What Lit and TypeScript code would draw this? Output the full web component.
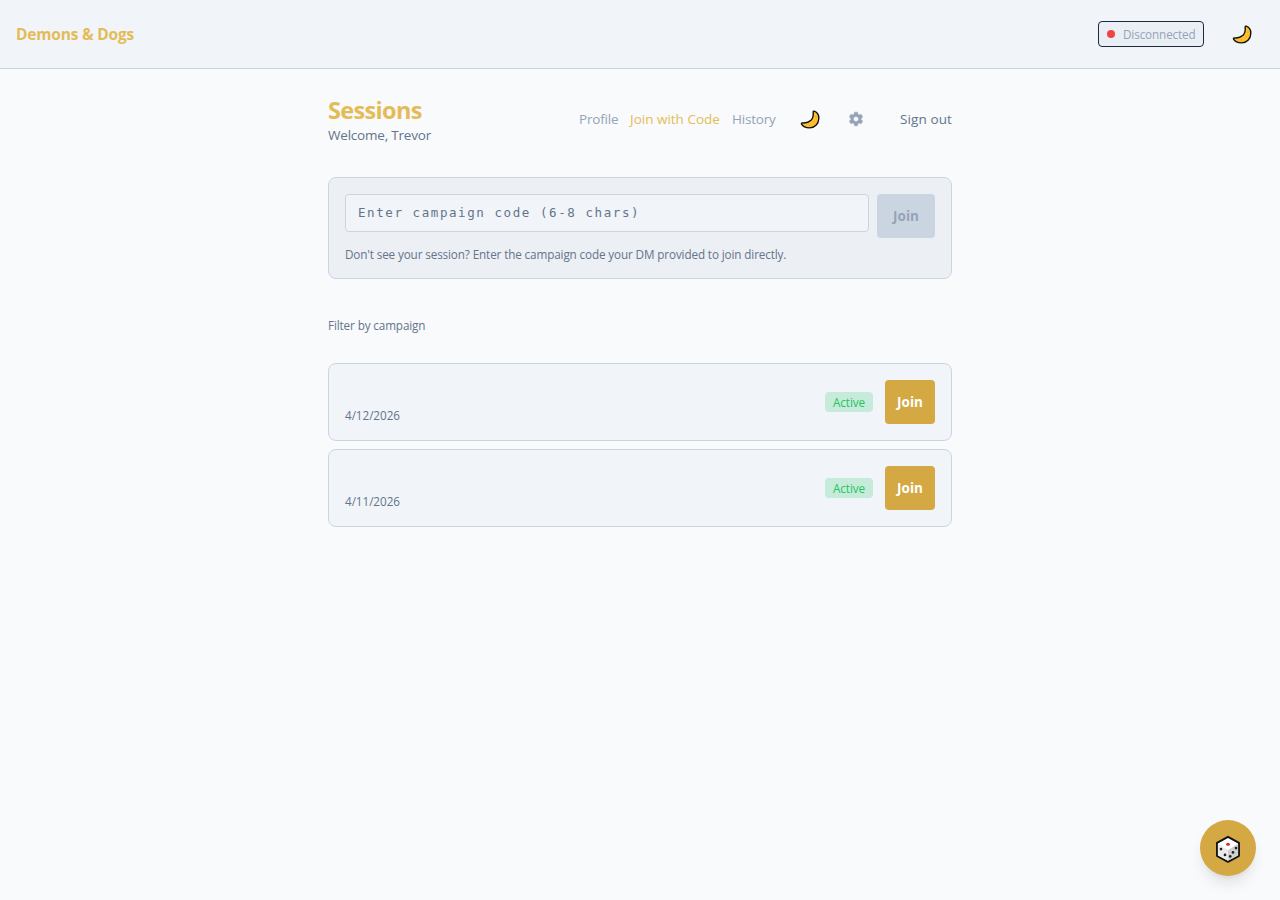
import { LitElement, html, css, svg } from "lit";
import { customElement } from "lit/decorators.js";

const moon = html`<svg class="moon" width="20" height="20" viewBox="0 0 20 20">
  <path d="M14.300 2.200C17.100 3.200 18.900 6 18.800 9.400C18.600 14.900 14.600 18.900 9.600 18.900C5.900 18.900 2.900 17.500 1.600 15.200C1.200 14.300 1.600 13.800 2.500 13.900C5.600 14.200 8.900 13.400 11 11.300C13.100 9.100 13.500 6.500 13.200 3.100C13.100 2.200 13.500 1.900 14.300 2.200Z" fill="#ffc02e" stroke="#111" stroke-width="1.400" stroke-linejoin="round"/>
  <circle cx="16" cy="8" r=".8" fill="#f0a01c"/><circle cx="9.500" cy="16.200" r=".8" fill="#f0a01c"/><circle cx="14" cy="12.600" r=".7" fill="#f0a01c"/>
</svg>`;

const gear = html`<svg width="16" height="16" viewBox="0.800 0.800 22.400 22.400" fill="currentColor"><path d="M19.140 12.940c.04-.3.06-.61.06-.94 0-.32-.02-.64-.07-.94l2.030-1.580c.18-.14.23-.41.12-.61l-1.920-3.320c-.12-.22-.37-.29-.59-.22l-2.390.96c-.5-.38-1.030-.7-1.620-.94l-.36-2.540c-.04-.24-.24-.41-.48-.41h-3.840c-.24 0-.43.17-.47.41l-.36 2.540c-.59.24-1.130.57-1.620.94l-2.390-.96c-.22-.08-.47 0-.59.22L2.740 8.870c-.12.21-.08.47.12.61l2.030 1.580c-.05.3-.09.63-.09.94s.02.64.07.94l-2.030 1.580c-.18.14-.23.41-.12.61l1.920 3.320c.12.22.37.29.59.22l2.390-.96c.5.38 1.030.7 1.620.94l.36 2.540c.05.24.24.41.48.41h3.840c.24 0 .44-.17.47-.41l.36-2.540c.59-.24 1.130-.56 1.620-.94l2.390.96c.22.08.47 0 .59-.22l1.920-3.320c.12-.22.07-.47-.12-.61l-2.010-1.580zM12 15.600c-1.980 0-3.600-1.620-3.600-3.600s1.620-3.600 3.600-3.600 3.600 1.620 3.600 3.600-1.620 3.600-3.600 3.600z" stroke="currentColor" stroke-width=".6"/></svg>`;

const pips = [[7, 15.500], [11, 21.300], [19, 18.800], [22, 14.500], [16.200, 22.800]];
const die = html`<svg width="28" height="30" viewBox="0 -.6 28 30">
  <path d="M14 3.200 25 9.200V22.200L14 28.200 3 22.200V9.200Z" fill="#fff" stroke="#111" stroke-width="1.900" stroke-linejoin="round"/>
  <path d="M14 16.500 24.100 10.200V21.800L14 27.200Z" fill="#d0d0d0"/>
  <path d="M14 16.500 3.900 10.200V21.800L14 27.200Z" fill="#ebebeb"/>
  <ellipse cx="14" cy="10.600" rx="1.900" ry="1.500" fill="#d9232e"/>
  ${pips.map(([x, y]) => svg`<circle cx=${x} cy=${y} r="1.350" fill="#222"/>`)}
</svg>`;

@customElement("app-root")
export class AppRoot extends LitElement {
  private sessions = ["4/12/2026", "4/11/2026"];

  static styles = css`
    :host { display: block; min-height: 900px; background: #f9fafc; color: #64748b; font-family: "Open Sans", "Noto Sans", sans-serif; font-size: 13.500px; letter-spacing: -0.200px; line-height: 20px; }
    * { box-sizing: border-box; }
    h1, p { margin: 0; }
    button { font: inherit; letter-spacing: inherit; border: 0; padding: 0; background: none; color: inherit; white-space: nowrap; }
    svg { display: block; }
    .bar { height: 69px; display: flex; align-items: center; justify-content: space-between; padding: 0 16px; background: #f1f4f9; border-bottom: 1px solid #cbd5e1; }
    .brand { font-size: 15.500px; font-weight: 700; letter-spacing: -0.200px; color: #e4bc57; }
    .tools { display: flex; align-items: center; gap: 16px; }
    .status { width: 106px; height: 26px; display: flex; align-items: center; gap: 8px; padding: 0 8px; border: 1px solid #1e293b; border-radius: 4px; background: #eaeff5; color: #94a3b8; font-size: 11.700px; letter-spacing: -0.120px; white-space: nowrap; }
    .dot { width: 8px; height: 8px; border-radius: 50%; background: #ef4444; flex: none; }
    .icon { width: 44px; height: 44px; display: grid; place-items: center; }
    main { width: 624px; margin: 0 auto; padding-top: 24px; }
    .head { display: flex; justify-content: space-between; align-items: center; height: 52px; }
    h1 { font-size: 23.500px; line-height: 32px; font-weight: 700; letter-spacing: -0.650px; color: #e4bc57; padding-top: 1px; height: 32px; }
    nav { display: flex; align-items: center; gap: 12px; color: #94a3b8; white-space: nowrap; }
    .profile { width: 40px; padding-left: 1px; } .code { width: 90px; color: #e4bc57; letter-spacing: 0; } .history { width: 44px; }
    .gear { width: 24px; display: grid; place-items: center; }
    .out { width: 52px; margin-left: 20px; color: #64748b; text-align: left; letter-spacing: 0.100px; }
    .panel { margin-top: 32px; padding: 16px; border: 1px solid #cbd5e1; border-radius: 8px; background: #eceff4; }
    .row { display: flex; align-items: flex-start; gap: 8px; }
    input { flex: 1; min-width: 0; height: 38px; padding: 0 12px 2px; border: 1px solid #cbd5e1; border-radius: 4px; background: #f1f4f9; font-family: "DejaVu Sans Mono", monospace; font-size: 12.500px; letter-spacing: 1.575px; }
    input::placeholder { color: #64748b; opacity: 1; }
    .join { height: 44px; width: 50px; border-radius: 4px; background: #d4a843; color: #fff; font-weight: 700; letter-spacing: 0; }
    .off { width: 58px; background: #cbd5e1; color: #94a3b8; }
    .small { font-size: 11.700px; line-height: 16px; letter-spacing: -0.120px; white-space: nowrap; }
    .hint { height: 16px; margin-top: 8px; }
    .filter { margin-top: 38px; }
    .list { display: grid; gap: 8px; margin-top: 30px; }
    .item { display: flex; align-items: center; gap: 12px; height: 78px; padding: 16px; border: 1px solid #cbd5e1; border-radius: 8px; background: #f1f4f9; }
    .date { flex: 1; align-self: flex-end; padding-bottom: 1px; letter-spacing: -0.050px; }
    .active { width: 48px; height: 20px; line-height: 20px; text-align: center; border-radius: 4px; background: #c7ebda; color: #22c55e; }
    .fab { position: fixed; right: 24px; bottom: 24px; width: 56px; height: 56px; border-radius: 50%; background: #d4a843; display: grid; place-items: center; box-shadow: 0 10px 15px -3px rgb(0 0 0 / .1), 0 4px 6px -4px rgb(0 0 0 / .1); }
  `;

  render() {
    return html`
      <header class="bar">
        <span class="brand">Demons &amp; Dogs</span>
        <div class="tools">
          <span class="status"><i class="dot"></i><span class="state">Disconnected</span></span>
          <button class="icon">${moon}</button>
        </div>
      </header>
      <main>
        <div class="head">
          <div><h1>Sessions</h1><p class="welcome">Welcome, Trevor</p></div>
          <nav>
            <span class="profile">Profile</span><span class="code">Join with Code</span><span class="history">History</span>
            <button class="icon">${moon}</button><button class="gear">${gear}</button><button class="out">Sign out</button>
          </nav>
        </div>
        <section class="panel">
          <div class="row"><input placeholder="Enter campaign code (6-8 chars)"><button class="join off">Join</button></div>
          <p class="small hint">Don't see your session? Enter the campaign code your DM provided to join directly.</p>
        </section>
        <p class="small filter">Filter by campaign</p>
        <div class="list">
          ${this.sessions.map((d) => html`<div class="item"><span class="small date">${d}</span><span class="small active">Active</span><button class="join">Join</button></div>`)}
        </div>
      </main>
      <button class="fab">${die}</button>`;
  }
}
